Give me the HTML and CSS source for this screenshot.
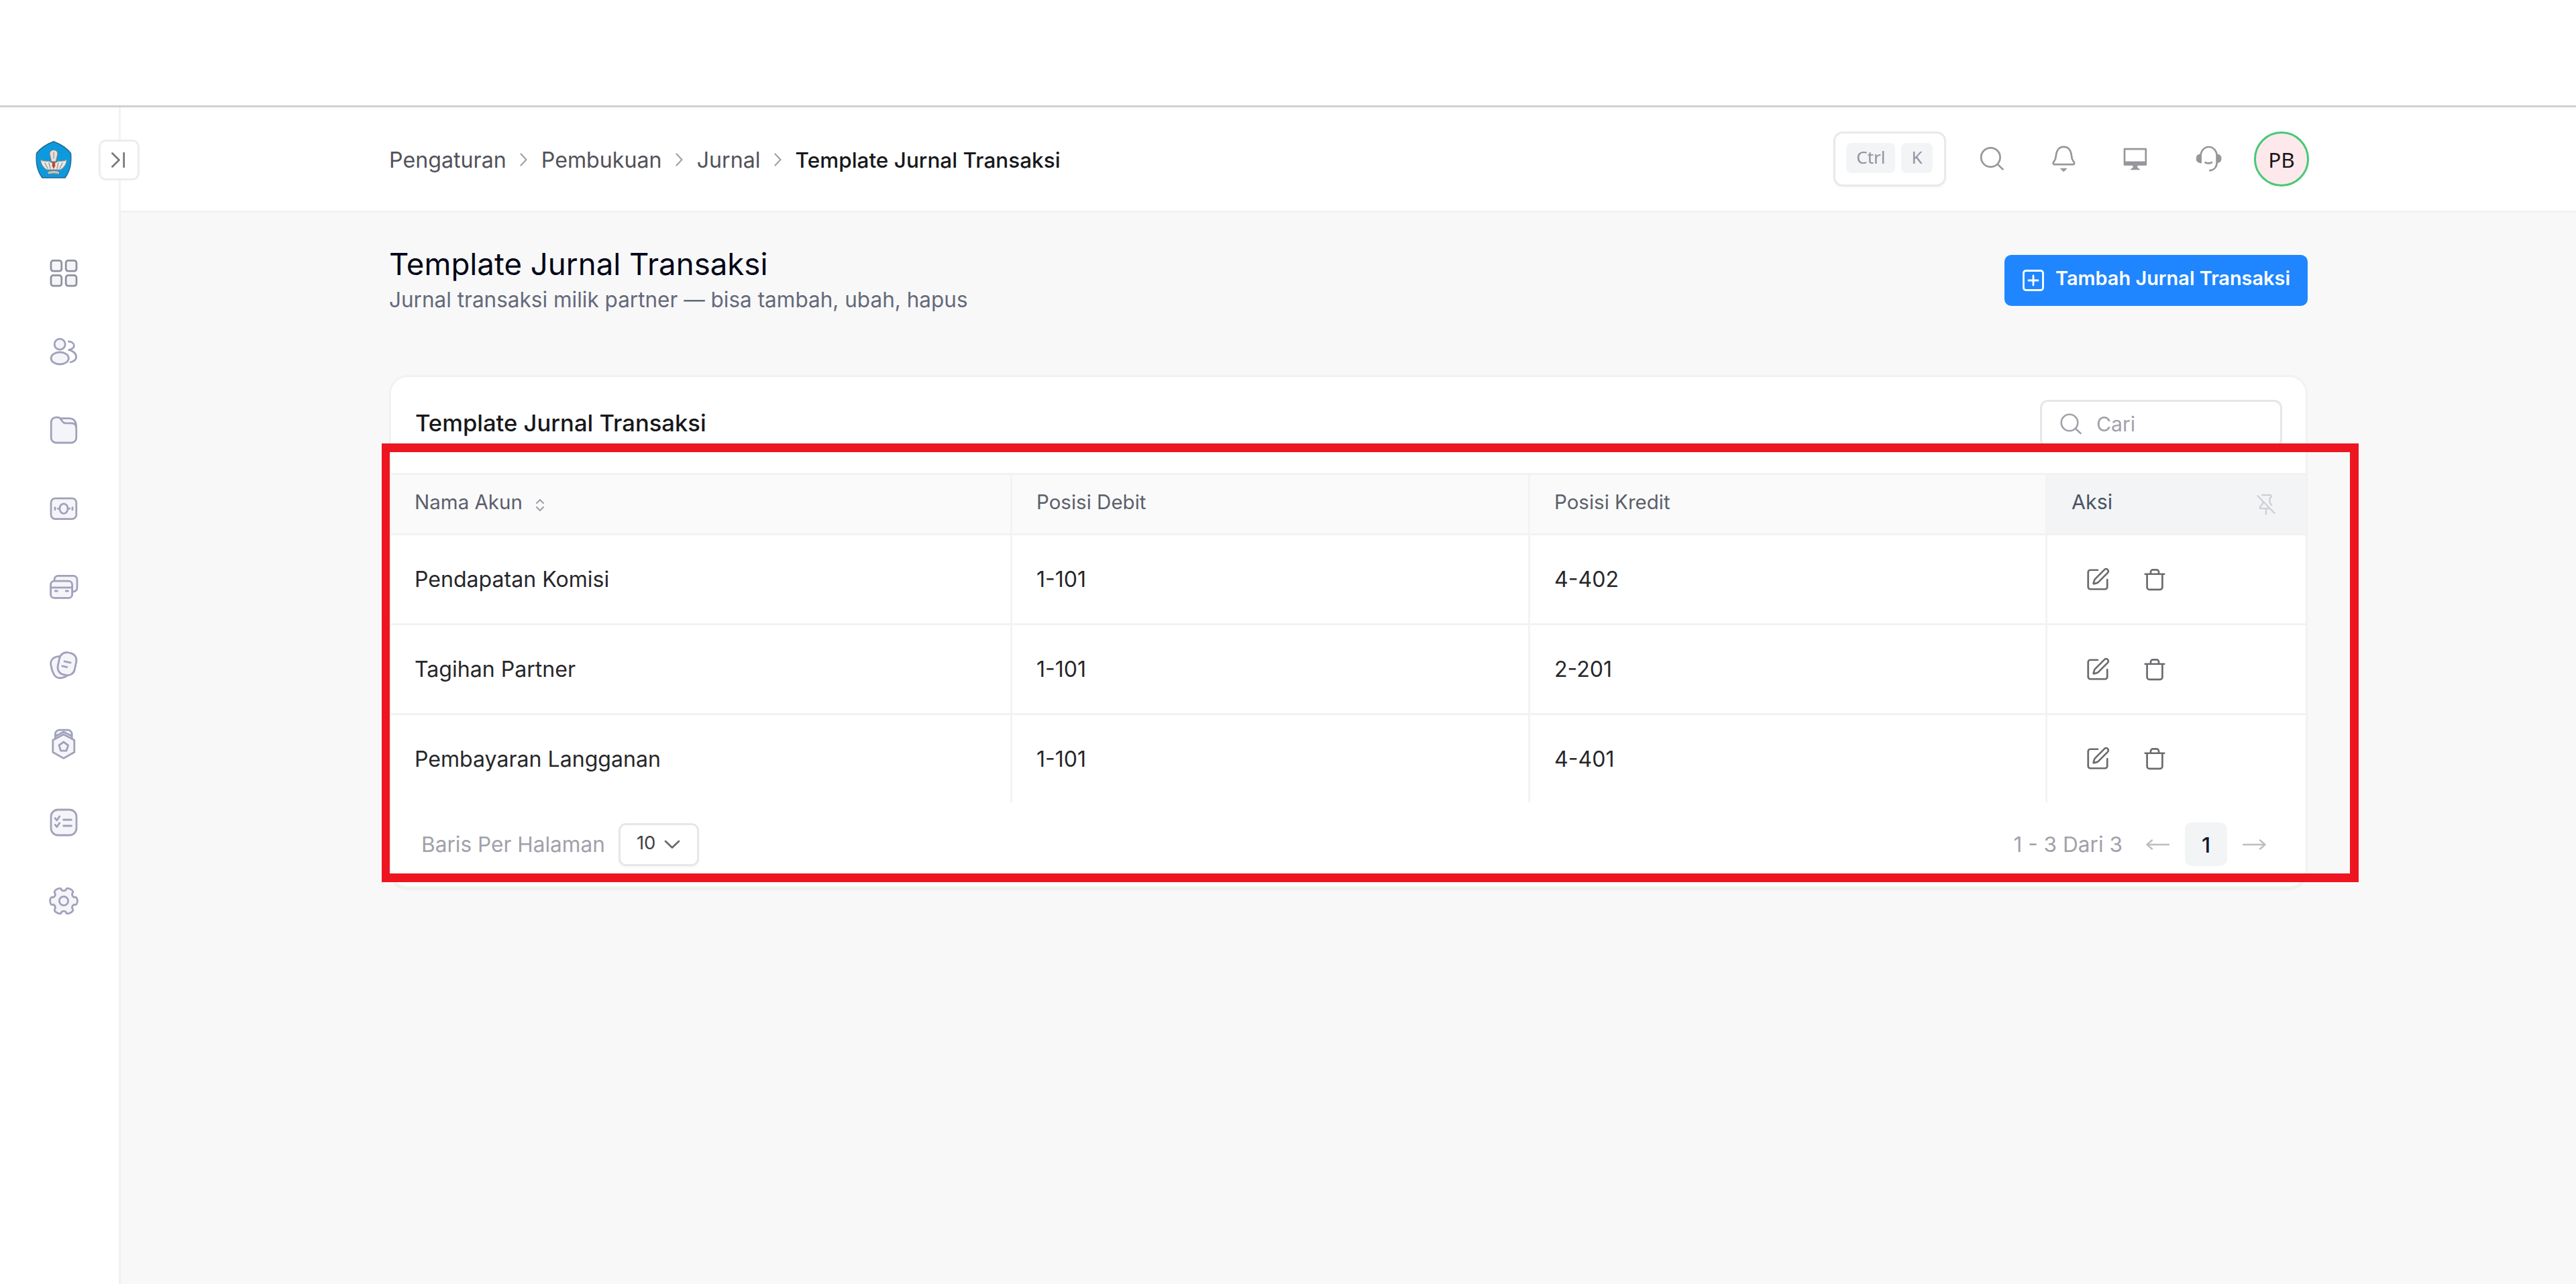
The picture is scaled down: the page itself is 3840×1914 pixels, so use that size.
FILE: index.html
```html
<!DOCTYPE html>
<html lang="id">
<head>
    <meta charset="UTF-8">
    <meta name="viewport" content="width=device-width, initial-scale=1.0">
    <title>Template Jurnal Transaksi</title>
    <link rel="stylesheet" href="styles.css">
</head>
<body>
    <!-- shared icons -->
    <svg class="sprite" aria-hidden="true">
        <symbol id="i-edit" viewBox="0 0 24 24">
            <path d="M12 3H5a2 2 0 0 0-2 2v14a2 2 0 0 0 2 2h14a2 2 0 0 0 2-2v-7"/>
            <path d="M18.4 2.6a2.1 2.1 0 0 1 3 3l-9 9a2 2 0 0 1-.9.5l-2.9.9a.5.5 0 0 1-.6-.6l.9-2.9a2 2 0 0 1 .5-.9z"/>
        </symbol>
        <symbol id="i-trash" viewBox="0 0 24 24">
            <path d="M3 6.8h18M4.8 6.8v12.4a2.2 2.2 0 0 0 2.2 2.2h10a2.2 2.2 0 0 0 2.2-2.2V6.8M8.2 6.4V4.8a2 2 0 0 1 2-2h3.6a2 2 0 0 1 2 2v1.6"/>
        </symbol>
        <symbol id="i-chevron" viewBox="0 0 12 20">
            <path d="M1.5 1.5l8 8.5-8 8.5"/>
        </symbol>
        <symbol id="i-arrow" viewBox="0 0 36 18">
            <path d="M1 9h32M26 2.5l7.5 6.5-7.5 6.5"/>
        </symbol>
    </svg>

    <div class="top-strip"></div>

    <div class="app">
        <aside class="sidebar">
            <svg class="logo" viewBox="0 0 54 56">
                <path d="M27 1C35 4 46 10 52.5 18.5C53.8 32 51 46 44 55H10C3 46 .2 32 1.500 18.500C8 10 19 4 27 1z" fill="#0c9ade" stroke="#23668c" stroke-width="1.4"/>
                <path d="M27 13.5c4.500 0 6.500 3 6 6.500l-2.500 11h-7l-2.500-11c-.5-3.500 1.500-6.500 6-6.500z" fill="#e3e1de" stroke="#777" stroke-width="1.200"/>
                <path d="M7.500 28c5 3 9 2 12.500 2l7 4 7-4c3.500 0 7.500 1 12.500-2-.5 7-4 12-9 15H16.500c-5-3-8.500-8-9-15z" fill="#eceae7" stroke="#7d8b92" stroke-width="1.200"/>
                <path d="M14 33l4 8M40 33l-4 8M20 33l2 8M34 33l-2 8" stroke="#8f9698" stroke-width="1.400"/>
                <path d="M25.500 31h3l1 6-2.500 5-2.500-5z" fill="#c8432f"/>
                <path d="M27 17v9" stroke="#a5a5a2" stroke-width="1.500"/>
                <path d="M18 46c6-2.500 12-2.500 18 0l-1 4c-5-1.500-11-1.500-16 0z" fill="#b9c4c9" stroke="#63757f" stroke-width="1"/>
            </svg>

            <nav class="side-nav">
                <svg class="nav-icon active" viewBox="0 0 24 24">
                    <rect x="2.500" y="2.700" width="7.900" height="7.900" rx="1.800"/>
                    <rect x="13.600" y="2.700" width="7.900" height="7.900" rx="1.800"/>
                    <rect x="2.500" y="13.700" width="7.900" height="7.900" rx="1.800"/>
                    <rect x="13.600" y="13.700" width="7.900" height="7.900" rx="1.800"/>
                </svg>
                <svg class="nav-icon" viewBox="0 0 24 24">
                    <circle cx="9.100" cy="6.600" r="4"/>
                    <ellipse cx="9.100" cy="17" rx="6.600" ry="4.500"/>
                    <path class="line" d="M15.700 4.500c2.400.2 4 1.500 4 3.100s-1.800 2.700-3.900 3.200c3.200.6 5.500 2.700 5.500 5.200s-1.800 3.400-4.300 4"/>
                </svg>
                <svg class="nav-icon" viewBox="0 0 24 24">
                    <path d="M10 3.300h6.200c2.900 0 4.700 1.700 5.100 5v3H10z"/>
                    <path d="M2.600 6.200a3.600 3.600 0 0 1 3.600-3.600h1.500c2.800 0 2.600 4.300 5.600 4.300h4.600c2.600 0 3.500 1.700 3.500 4.100v6.800a3.700 3.700 0 0 1-3.700 3.700H6.300a3.700 3.700 0 0 1-3.700-3.700z"/>
                </svg>
                <svg class="nav-icon" viewBox="0 0 24 24">
                    <rect x="2.500" y="4.400" width="18.900" height="15.400" rx="3.200"/>
                    <ellipse cx="12" cy="12.100" rx="3" ry="3.700"/>
                    <path class="line" d="M5.500 11.300v1.600M18.500 11.300v1.600M7.600 12.100h.4M16 12.100h.4"/>
                </svg>
                <svg class="nav-icon" viewBox="0 0 24 24">
                    <path d="M5 7.600V6.500a2.800 2.800 0 0 1 2.800-2.800h11.400a2.800 2.800 0 0 1 2.800 2.800v6.200a2.800 2.800 0 0 1-2.800 2.800h-1"/>
                    <rect x="2.300" y="7.600" width="16" height="12.600" rx="2.600"/>
                    <path class="line" d="M2.300 12.400h16M5.600 15h1.600M13.600 15h1.600"/>
                </svg>
                <svg class="nav-icon" viewBox="0 0 24 24">
                    <path d="M8.500 5.200c-4 .2-6.600 2.700-6.100 6.200.3 2.400 1.100 5 2.200 7.200 1.900 3.600 6.400 3.600 10.600.6z"/>
                    <rect x="8.100" y="2.400" width="12.800" height="16.800" rx="5.400" transform="rotate(12 14.500 10.800)"/>
                    <path class="line" d="M12.500 8.900l4.600 1M10.900 12.400l3.500.8"/>
                </svg>
                <svg class="nav-icon" viewBox="0 0 24 24">
                    <path d="M5.700 8.500V4.800a3.200 3.200 0 0 1 3.200-3.200h6a3.200 3.200 0 0 1 3.200 3.200v3.700M6.200 6l5.700-3 5.900 3"/>
                    <path d="M11.900 4.900l8 4.200v9l-8 4.600-8-4.600v-9z"/>
                    <path d="M11.900 10.500l3.400 2.500-1.300 4.100H9.800L8.500 13z"/>
                </svg>
                <svg class="nav-icon" viewBox="0 0 24 24">
                    <rect x="2.500" y="2.500" width="19" height="19" rx="5.200"/>
                    <path class="line" d="M5.600 8.800l1.300 1.600 2-2.900M5.600 13.700l1.300 1.600 2-2.900M11.800 10h5.900M11.800 14.500h5.900"/>
                </svg>
                <svg class="nav-icon" viewBox="0 0 24 24">
                    <path d="M19.900 9.300Q22 8.500 22.200 12Q22 15.500 19.900 14.700Q18 15.500 18.300 17.500Q20 19 17.100 20.800Q14 22.400 13.600 20.200Q12 18.900 10.400 20.200Q10 22.400 6.900 20.800Q4 19 5.700 17.500Q6 15.500 4.100 14.700Q2 15.500 1.800 12Q2 8.500 4.100 9.300Q6 8.500 5.700 6.500Q4 5 6.900 3.200Q10 1.600 10.400 3.800Q12 5.100 13.600 3.800Q14 1.600 17.100 3.200Q20 5 18.300 6.500Q18 8.500 19.900 9.300z"/>
                    <circle cx="12" cy="12" r="3.300"/>
                </svg>
            </nav>

            <button class="sidebar-toggle" type="button">
                <svg viewBox="0 0 24 24"><path d="M1.500 1.500L12 12 1.500 22.500M19.500 1v22"/></svg>
            </button>
        </aside>

        <div class="page">
            <header class="header">
                <nav class="breadcrumb">
                    <span>Pengaturan</span>
                    <svg><use href="#i-chevron"/></svg>
                    <span>Pembukuan</span>
                    <svg><use href="#i-chevron"/></svg>
                    <span>Jurnal</span>
                    <svg><use href="#i-chevron"/></svg>
                    <span class="current">Template Jurnal Transaksi</span>
                </nav>

                <div class="header-tools">
                    <div class="shortcut"><kbd>Ctrl</kbd><kbd>K</kbd></div>
                    <div class="tool-icons">
                        <svg viewBox="0 0 24 24"><circle cx="11.200" cy="10.800" r="7.100"/><path d="M16.300 15.800l4 3.900"/></svg>
                        <svg viewBox="0 0 24 24">
                            <path d="M11.700 2.900c-3.100 0-5 2.100-5.500 5l-.7 4-1.500 2.700c-.4.8 0 1.500.8 1.500h13.800c.8 0 1.200-.7.800-1.500l-1.500-2.700-.7-4c-.5-2.900-2.400-5-5.500-5z"/>
                            <path class="solid" d="M9.400 19.100h4.600l-2.300 2.200z"/>
                        </svg>
                        <svg viewBox="0 0 24 24">
                            <path d="M3.500 4.600h15.900v11.600H3.500z"/>
                            <path class="solid" d="M3.500 14h15.900v2.400H3.500zM10 16.500h2.900v1.900l2 1.500H8l2-1.500z"/>
                        </svg>
                        <svg viewBox="0 0 24 24">
                            <path d="M6.300 14.600V9.600a6 6.600 0 0 1 12 0v5c0 3.400-2 5.600-5.200 6M9.700 14.600c1.500.7 3.300.7 4.800 0"/>
                            <path class="solid" d="M6.300 8.600v6c-2 .3-3.200-.8-3.200-3s1.200-3.200 3.200-3zM18.300 8.600v6c2 .3 3.200-.8 3.200-3s-1.200-3.200-3.200-3z"/>
                        </svg>
                    </div>
                    <div class="avatar">PB</div>
                </div>
            </header>

            <main class="content">
                <div class="page-head">
                    <div>
                        <h1>Template Jurnal Transaksi</h1>
                        <p>Jurnal transaksi milik partner — bisa tambah, ubah, hapus</p>
                    </div>
                    <button class="btn-add" type="button">
                        <svg viewBox="0 0 32 32"><rect x="1.500" y="1.500" width="29" height="29" rx="3.500"/><path d="M16 9v14M9 16h14"/></svg>
                        <span>Tambah Jurnal Transaksi</span>
                    </button>
                </div>

                <section class="card">
                    <div class="card-head">
                        <h2>Template Jurnal Transaksi</h2>
                        <div class="search">
                            <svg viewBox="0 0 32 32"><circle cx="14" cy="14" r="12.300"/><path d="M23 23l7.500 7"/></svg>
                            <span>Cari</span>
                        </div>
                    </div>

                    <table class="table">
                        <colgroup>
                            <col class="col-name"><col class="col-debit"><col class="col-kredit"><col class="col-aksi">
                        </colgroup>
                        <thead>
                            <tr>
                                <th>
                                    Nama Akun
                                    <svg class="sort" viewBox="0 0 14 20"><path d="M2 7l5-5 5 5M2 13l5 5 5-5"/></svg>
                                </th>
                                <th>Posisi Debit</th>
                                <th>Posisi Kredit</th>
                                <th class="pinned">
                                    <div class="pinned-head">
                                        <span>Aksi</span>
                                        <svg viewBox="0 0 28 32"><path d="M1.500 3l25 26M8 2h12c2 0 2.500 3 .5 4l-1 .5v6.500l2.500 4M9 11v4l-4 4.500V22h13.500M14 22v8.500"/></svg>
                                    </div>
                                </th>
                            </tr>
                        </thead>
                        <tbody>
                            <tr>
                                <td>Pendapatan Komisi</td>
                                <td>1-101</td>
                                <td>4-402</td>
                                <td><div class="actions"><svg><use href="#i-edit"/></svg><svg><use href="#i-trash"/></svg></div></td>
                            </tr>
                            <tr>
                                <td>Tagihan Partner</td>
                                <td>1-101</td>
                                <td>2-201</td>
                                <td><div class="actions"><svg><use href="#i-edit"/></svg><svg><use href="#i-trash"/></svg></div></td>
                            </tr>
                            <tr>
                                <td>Pembayaran Langganan</td>
                                <td>1-101</td>
                                <td>4-401</td>
                                <td><div class="actions"><svg><use href="#i-edit"/></svg><svg><use href="#i-trash"/></svg></div></td>
                            </tr>
                        </tbody>
                    </table>

                    <div class="card-foot">
                        <div class="per-page">
                            <span>Baris Per Halaman</span>
                            <div class="select">
                                <span>10</span>
                                <svg viewBox="0 0 24 14"><path d="M2 2l10 9.500L22 2"/></svg>
                            </div>
                        </div>
                        <div class="pager">
                            <span>1 - 3 Dari 3</span>
                            <svg class="prev"><use href="#i-arrow"/></svg>
                            <b>1</b>
                            <svg><use href="#i-arrow"/></svg>
                        </div>
                    </div>
                </section>
            </main>
        </div>
    </div>

    <!-- red frame around the table -->
    <div class="highlight"></div>
</body>
</html>
```
FILE: styles.css
```css
* {
    box-sizing: border-box;
}
body {
    margin: 0;
    height: 1914px;
    display: flex;
    flex-direction: column;
    position: relative;
    overflow: hidden;
    background: #fff;
    color: #27272a;
    font-family: Inter, "Liberation Sans", sans-serif;
}
svg {
    display: block;
    flex: none;
    fill: none;
    stroke: currentColor;
    stroke-linecap: round;
    stroke-linejoin: round;
}
.sprite {
    position: absolute;
    width: 0;
    height: 0;
}
button {
    font-family: inherit;
    padding: 0;
}
h1, h2, p {
    margin: 0;
}
.top-strip {
    flex: none;
    height: 160px;
    border-bottom: 3px solid #d0d0d0;
}
.app {
    flex: 1;
    display: flex;
}

/* sidebar */
.sidebar {
    position: relative;
    flex: none;
    width: 180px;
    border-right: 3px solid #f2f2f3;
    background: #fff;
}
.logo {
    width: 54px;
    height: 56px;
    margin: 50px 0 0 53px;
    stroke: none;
}
.side-nav {
    display: flex;
    flex-direction: column;
    gap: 69px;
    margin: 117px 0 0 71px;
}
.nav-icon {
    width: 48px;
    height: 48px;
    color: #a0a1bb;
    fill: #f5f5f9;
    stroke-width: 1.4;
}
.nav-icon.active {
    color: #8f91a1;
}
.nav-icon .line {
    fill: none;
}
.sidebar-toggle {
    position: absolute;
    top: 48px;
    left: 147px;
    width: 61px;
    height: 61px;
    display: flex;
    align-items: center;
    justify-content: center;
    background: #fff;
    border: 3px solid #ededed;
    border-radius: 11px;
    color: #77777b;
}
.sidebar-toggle svg {
    width: 23px;
    height: 23px;
    stroke-width: 2.8;
}

/* header */
.page {
    flex: 1;
    display: flex;
    flex-direction: column;
    background: #f8f8f8;
}
.header {
    flex: none;
    display: flex;
    align-items: center;
    justify-content: space-between;
    height: 157px;
    padding: 0 398px 0 400px;
    background: #fff;
    border-bottom: 3px solid #f2f2f2;
}
.breadcrumb {
    display: flex;
    align-items: center;
    gap: 20px;
    padding-top: 2px;
    font-size: 32.2px;
    color: #52525b;
}
.breadcrumb svg {
    width: 12px;
    height: 20px;
    color: #a1a1aa;
    stroke-width: 2.2;
}
.breadcrumb .current {
    font-size: 31.5px;
    font-weight: 500;
    color: #18181b;
}
.header-tools {
    display: flex;
    align-items: center;
    gap: 44px;
}
.shortcut {
    display: flex;
    gap: 9px;
    width: 168px;
    height: 82px;
    padding: 14px 16px;
    border: 3px solid #e9e9ea;
    border-radius: 14px;
    box-shadow: 0 2px 3px rgba(0, 0, 0, 0.04);
}
.shortcut kbd {
    height: 45px;
    padding: 0 15px;
    border-radius: 8px;
    background: #f3f4f6;
    color: #92959e;
    font-family: "Noto Sans", sans-serif;
    font-size: 26px;
    line-height: 42px;
}
.tool-icons {
    display: flex;
    gap: 59.6px;
}
.tool-icons svg {
    width: 48px;
    height: 48px;
    color: #97979b;
    stroke-width: 1.35;
}
.tool-icons .solid {
    fill: currentColor;
    stroke-width: 0.5;
}
.avatar {
    width: 82px;
    height: 82px;
    border: 3px solid #45c974;
    border-radius: 50%;
    background: #fde9ec;
    color: #18181b;
    font-family: "Noto Sans", sans-serif;
    font-size: 31.5px;
    line-height: 77px;
    text-align: center;
}

/* page title */
.content {
    padding: 49px 400px 0;
}
.page-head {
    display: flex;
    align-items: center;
    justify-content: space-between;
}
.page-head h1 {
    font-size: 45.6px;
    font-weight: 400;
    line-height: 56px;
    color: #020617;
}
.page-head p {
    margin-top: 2px;
    font-size: 31.5px;
    line-height: 46px;
    color: #64697b;
}
.btn-add {
    display: flex;
    align-items: center;
    gap: 17px;
    width: 452px;
    height: 76px;
    padding-left: 27px;
    border: 0;
    border-radius: 10px;
    background: #1f86ff;
    color: #fff;
    font-size: 28.9px;
    font-weight: 600;
}
.btn-add svg {
    width: 32px;
    height: 32px;
    stroke-width: 2.8;
}
.btn-add span {
    padding-bottom: 8px;
}

/* table card */
.card {
    height: 765px;
    margin-top: 89px;
    border: 3px solid #f2f2f3;
    border-radius: 28px;
    background: #fff;
    box-shadow: 0 3px 2px #efefef;
}
.card-head {
    display: flex;
    justify-content: space-between;
    height: 143px;
    padding: 34px 35px 0 36px;
}
.card-head h2 {
    font-size: 34.6px;
    font-weight: 500;
    line-height: 68px;
    color: #18181b;
}
.search {
    display: flex;
    align-items: center;
    gap: 22px;
    width: 361px;
    height: 72px;
    padding-left: 27px;
    border: 3px solid #e6e6e8;
    border-radius: 12px;
    color: #a1a1aa;
    font-size: 30.2px;
}
.search svg {
    width: 32px;
    height: 32px;
    stroke-width: 2.6;
}
.table {
    width: 100%;
    table-layout: fixed;
    border-collapse: separate;
    border-spacing: 0;
}
.col-name {
    width: 926px;
}
.col-debit {
    width: 772px;
}
.col-kredit {
    width: 771px;
}
th, td {
    padding: 0 34px 0 36px;
    border-right: 3px solid #f3f3f4;
    border-bottom: 3px solid #f2f2f3;
    text-align: left;
    vertical-align: middle;
    white-space: nowrap;
}
th:first-child, td:first-child {
    padding-left: 35px;
}
th:last-child, td:last-child {
    border-right: 0;
}
th {
    height: 93px;
    padding-bottom: 7px;
    border-top: 3px solid #f2f2f3;
    background: #fafafa;
    color: #5b606b;
    font-size: 29.5px;
    font-weight: 400;
}
td {
    height: 134px;
    font-size: 32.1px;
}
tbody tr:last-child td {
    height: 130px;
    border-bottom: 0;
}
.sort {
    display: inline-block;
    width: 14px;
    height: 20px;
    margin-left: 11px;
    vertical-align: -4px;
    color: #a1a1aa;
    stroke-width: 2.2;
}
.table .pinned {
    background: #f3f4f6;
    color: #4b5563;
    font-size: 30.4px;
}
.pinned-head {
    display: flex;
    align-items: center;
    justify-content: space-between;
    padding-right: 11px;
}
.pinned-head svg {
    width: 28px;
    height: 32px;
    color: #cfd1d6;
    stroke-width: 2.4;
    position: relative;
    top: 4px;
}
.actions {
    display: flex;
    gap: 47px;
    padding-left: 20px;
}
.actions svg {
    width: 38px;
    height: 38px;
    color: #6b6b6f;
    stroke-width: 1.7;
}

/* pagination */
.card-foot {
    display: flex;
    align-items: center;
    justify-content: space-between;
    padding: 30px 58px 0 45px;
    color: #a1a1aa;
    font-size: 31.6px;
}
.per-page, .pager {
    display: flex;
    align-items: center;
}
.per-page {
    gap: 20px;
}
.select {
    display: flex;
    align-items: center;
    gap: 13px;
    width: 120px;
    height: 64px;
    padding-left: 24px;
    border: 3px solid #e7e7e9;
    border-radius: 11px;
    box-shadow: 0 2px 3px rgba(0, 0, 0, 0.04);
    color: #3f3f46;
    font-size: 27.5px;
}
.select span {
    padding-bottom: 6px;
}
.select svg {
    width: 24px;
    height: 14px;
    color: #6b6b70;
    stroke-width: 2.8;
}
.pager {
    gap: 23px;
}
.pager svg {
    width: 36px;
    height: 18px;
    color: #bdbdc2;
    stroke-width: 2.4;
}
.pager .prev {
    margin-left: 11px;
    transform: scaleX(-1);
}
.pager b {
    width: 63px;
    height: 65px;
    border-radius: 10px;
    background: #f3f4f6;
    color: #0f172a;
    font-weight: 500;
    line-height: 67px;
    text-align: center;
}

.highlight {
    position: absolute;
    top: 661px;
    left: 569px;
    width: 2947px;
    height: 654px;
    border: 13px solid #ed1620;
    border-left-width: 12px;
}
```
